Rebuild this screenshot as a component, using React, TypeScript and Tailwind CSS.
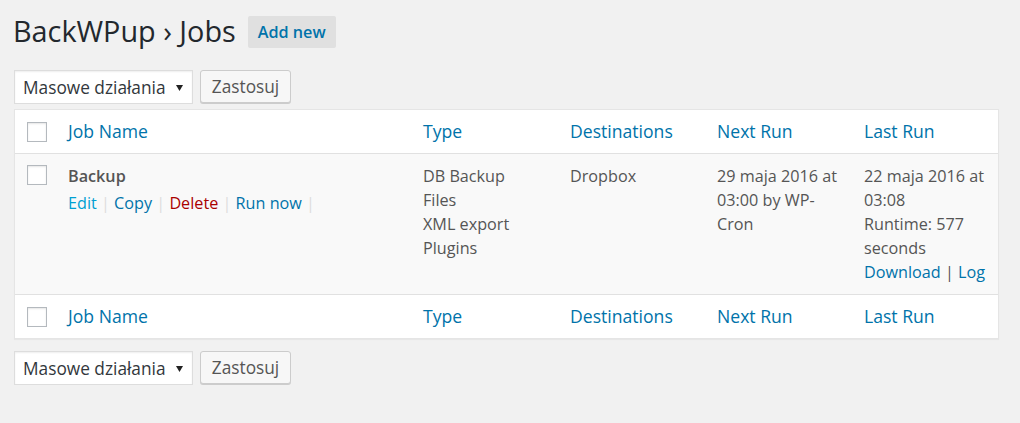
import React from "react";

const font = { fontFamily: '"Open Sans", "Noto Sans", "Liberation Sans", sans-serif' };

function Checkbox() {
  return (
    <span className="block h-[20px] w-[20px] border border-[#b4b9be] bg-white shadow-[inset_0_1px_2px_rgba(0,0,0,0.1)]" />
  );
}

function BulkActions() {
  return (
    <div className="flex items-start gap-[7px]">
      <div className="flex h-[34px] w-[179px] items-center justify-between border border-[#ddd] bg-white pl-[8px] pr-[9px] pt-[2px] text-[17.3px] text-[#32373c] shadow-[inset_0_1px_2px_rgba(0,0,0,0.07)]">
        <span>Masowe działania</span>
        <svg width="7" height="6" viewBox="0 0 7 6" className="-mt-[1px]">
          <path d="M0 0 H7 L3.5 6 Z" fill="#222" />
        </svg>
      </div>
      <button className="h-[33px] w-[91px] rounded-[3px] border border-[#ccc] bg-[#f7f7f7] pt-[1px] text-[17.3px] text-[#555] shadow-[0_1px_0_#ccc]">
        Zastosuj
      </button>
    </div>
  );
}

function HeaderCells() {
  const cols = ["Job Name", "Type", "Destinations", "Next Run", "Last Run"];
  return (
    <>
      <th className="py-[10px] pl-[12px] align-middle">
        <Checkbox />
      </th>
      {cols.map((c) => (
        <th
          key={c}
          className="px-[10px] py-[10px] text-left align-middle text-[17.6px] font-normal leading-[23px] text-[#0073aa]"
        >
          <a className="cursor-pointer">{c}</a>
        </th>
      ))}
    </>
  );
}

export default function App() {
  return (
    <div className="min-h-[423px] w-full bg-[#f1f1f1] pl-[14px] text-[#555]" style={font}>
      {/* page title */}
      <div className="flex items-start pt-[12px]">
        <h1 className="-ml-[1px] text-[28.8px] font-normal leading-[37px] text-[#23282d]">
          BackWPup › Jobs
        </h1>
        <a className="ml-[12px] mt-[4px] cursor-pointer rounded-[2px] bg-[#e0e0e0] px-[10px] py-[4px] text-[16.2px] font-semibold leading-[24px] text-[#0073aa]">
          Add new
        </a>
      </div>

      {/* top bulk actions */}
      <div className="mt-[21px]">
        <BulkActions />
      </div>

      {/* jobs table */}
      <div className="mt-[5px] w-[985px] border border-[#e5e5e5] bg-white shadow-[0_1px_1px_rgba(0,0,0,0.04)]">
        <table className="w-[983px] table-fixed border-separate border-spacing-0 text-[16.2px] leading-[24px]">
          <colgroup>
            <col className="w-[43px]" />
            <col className="w-[355px]" />
            <col className="w-[147px]" />
            <col className="w-[147px]" />
            <col className="w-[147px]" />
            <col className="w-[144px]" />
          </colgroup>
          <thead>
            <tr className="[&>th]:border-b [&>th]:border-[#e1e1e1]">
              <HeaderCells />
            </tr>
          </thead>
          <tbody>
            <tr className="bg-[#f9f9f9] align-top">
              <td className="pl-[12px] pt-[11px]">
                <Checkbox />
              </td>
              <td className="px-[10px] pb-[10px] pt-[10px]">
                <strong className="font-semibold text-[#555]">Backup</strong>
                <div className="pt-[3px] text-[#ddd]">
                  <a className="text-[#00a0d2]">Edit</a> |{" "}
                  <a className="text-[#0073aa]">Copy</a> |{" "}
                  <a className="text-[#a00]">Delete</a> |{" "}
                  <a className="text-[#0073aa]">Run now</a> |
                </div>
              </td>
              <td className="px-[10px] pb-[10px] pt-[10px]">
                DB Backup
                <br />
                Files
                <br />
                XML export
                <br />
                Plugins
              </td>
              <td className="px-[10px] pb-[10px] pt-[10px]">Dropbox</td>
              <td className="px-[10px] pb-[10px] pt-[10px]">29 maja 2016 at 03:00 by WP-Cron</td>
              <td className="px-[10px] pb-[10px] pt-[10px]">
                22 maja 2016 at 03:08
                <br />
                Runtime: 577 seconds
                <br />
                <a className="text-[#0073aa]">Download</a> | <a className="text-[#0073aa]">Log</a>
              </td>
            </tr>
          </tbody>
          <tfoot>
            <tr className="[&>th]:border-t [&>th]:border-[#e1e1e1]">
              <HeaderCells />
            </tr>
          </tfoot>
        </table>
      </div>

      {/* bottom bulk actions */}
      <div className="mt-[12px]">
        <BulkActions />
      </div>
    </div>
  );
}
